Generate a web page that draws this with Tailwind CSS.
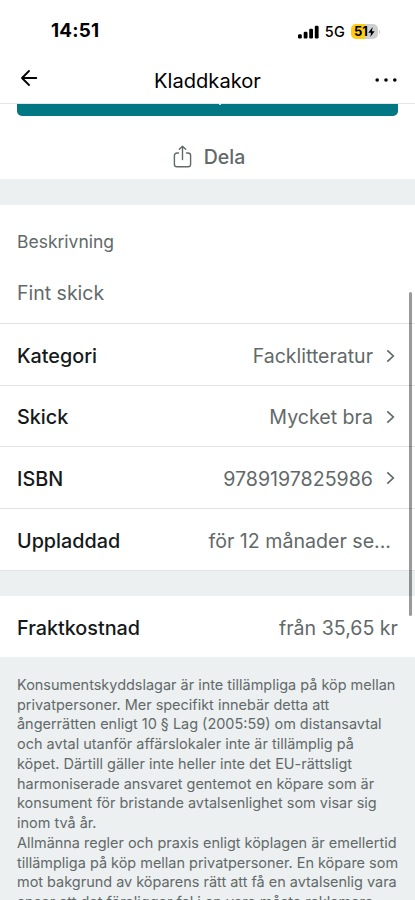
<!DOCTYPE html>
<html lang="sv">
<head>
<meta charset="utf-8">
<meta name="viewport" content="width=device-width, initial-scale=1">
<title>Kladdkakor</title>
<script src="https://cdn.jsdelivr.net/npm/@tailwindcss/browser@4"></script>
</head>
<body class="relative h-[900px] w-[415px] overflow-hidden bg-white font-['Inter',sans-serif] text-[19.6px] text-[#626969]">
<header class="flex h-[104px] flex-col border-b border-[#e4e6e7] text-black">
  <div class="flex h-[62px] items-center justify-between pt-[1px] pr-[35px] pl-[51px]">
    <span class="text-[18.8px] font-bold tracking-[0.2px]">14:51</span>
    <div class="flex items-center">
      <svg class="h-[14px] w-[21px]" viewBox="0 0 21 14"><rect x="0" y="9.3" width="3.8" height="4.2" rx="1.2"/><rect x="5.7" y="6.7" width="3.8" height="6.800" rx="1.2"/><rect x="11.2" y="3.8" width="3.8" height="9.700" rx="1.2"/><rect x="16.8" y="0.7" width="3.8" height="12.800" rx="1.2"/></svg>
      <span class="ml-[6px] text-[14.5px] font-medium tracking-[0.2px]">5G</span>
      <div class="ml-[6px] flex h-[15px] w-[27px] items-center justify-center rounded-[5px] bg-linear-to-r from-[#fccd13] from-52% to-[#cfcfcf] to-52%">
        <span class="text-[13px] font-bold">51</span>
        <svg class="h-[10px] w-[7px]" viewBox="0 0 7 11"><path d="M4.8 0 0 6.2h3L2.2 11 7 4.7H4z"/></svg>
      </div>
      <span class="ml-[1px] h-[4px] w-[1px] rounded-r bg-[#cfcfcf]"></span>
    </div>
  </div>
  <div class="flex h-[41px] items-center justify-between pr-[17px] pl-[21px]">
    <svg class="mt-[-9px] h-[16px] w-[17px]" viewBox="0 0 17 16" fill="none" stroke="#000" stroke-width="1.8" stroke-linecap="round" stroke-linejoin="round"><path d="M15.300 8H1.2M8 1 1 8l7 7"/></svg>
    <h1 class="mt-[-3px] pl-[2px] text-[20.1px]">Kladdkakor</h1>
    <svg class="mt-[-5px] h-[4px] w-[23px]" viewBox="0 0 23 4"><circle cx="2.2" cy="2" r="1.8"/><circle cx="11" cy="2" r="1.8"/><circle cx="19.8" cy="2" r="1.8"/></svg>
  </div>
</header>
<main>
  <div class="flex h-[12px] justify-center px-[17px]">
    <div class="relative w-full rounded-b-[5px] bg-[#007782]"><span class="absolute top-[-1px] left-[202px] h-[2px] w-[2px] rounded-full bg-white"></span></div>
  </div>
  <div class="flex h-[63px] items-center justify-center gap-[12px] pt-[19px] pl-[3px]">
    <svg class="mt-[-2px] h-[23px] w-[19px]" viewBox="0 0 19 23" fill="none" stroke="#626969" stroke-width="1.4" stroke-linecap="round" stroke-linejoin="round"><path d="M5.5 8H4a2.6 2.6 0 0 0-2.6 2.6v8.6A2.6 2.6 0 0 0 4 21.800h11a2.600 2.600 0 0 0 2.600-2.600v-8.600A2.600 2.600 0 0 0 15 8h-1.500M9.500 14.500V1.500M6.300 4.300l3.200-3.100 3.200 3.100"/></svg>
    <span class="pt-[1px] text-[19.5px] font-medium">Dela</span>
  </div>
  <div class="h-[26px] bg-[#ecf0f1]"></div>
  <section class="flex h-[119px] flex-col border-b border-[#e0e3e4] px-[17px] pt-[25px]">
    <h2 class="text-[17.5px] leading-[24px]">Beskrivning</h2>
    <p class="mt-[25px] text-[19.5px] leading-[28px]">Fint skick</p>
  </section>
  <section>
    <div class="flex h-[62px] items-center justify-between border-b border-[#e0e3e4] pt-[4px] pr-[19px] pl-[17px]"><span class="text-[19.8px] font-medium text-[#15191a]">Kategori</span><span class="flex items-center gap-[13px] text-[19.5px]">Facklitteratur<svg class="mt-[-2px] mr-px h-[14px] w-[9px]" viewBox="0 0 9 14" fill="none" stroke="#626969" stroke-width="1.7"><path d="m1.300 1.300 6 5.700-6 5.700"/></svg></span></div>
    <div class="flex h-[61px] items-center justify-between border-b border-[#e0e3e4] pt-[4px] pr-[19px] pl-[17px]"><span class="text-[19.8px] font-medium text-[#15191a]">Skick</span><span class="flex items-center gap-[13px]">Mycket bra<svg class="mt-[-2px] mr-px h-[14px] w-[9px]" viewBox="0 0 9 14" fill="none" stroke="#626969" stroke-width="1.7"><path d="m1.300 1.300 6 5.700-6 5.700"/></svg></span></div>
    <div class="flex h-[62px] items-center justify-between border-b border-[#e0e3e4] pt-[4px] pr-[19px] pl-[17px]"><span class="text-[19.8px] font-medium text-[#15191a]">ISBN</span><span class="flex items-center gap-[13px]">9789197825986<svg class="mt-[-2px] mr-px h-[14px] w-[9px]" viewBox="0 0 9 14" fill="none" stroke="#626969" stroke-width="1.7"><path d="m1.300 1.300 6 5.700-6 5.700"/></svg></span></div>
    <div class="flex h-[62px] items-center justify-between border-b border-[#e0e3e4] pt-[4px] pr-[24px] pl-[17px]"><span class="text-[19.8px] font-medium text-[#15191a]">Uppladdad</span><span>för 12 månader se...</span></div>
  </section>
  <div class="h-[25px] bg-[#ecf0f1]"></div>
  <div class="flex h-[61px] items-center justify-between px-[17px] pt-[4px]"><span class="text-[19.8px] font-medium text-[#15191a]">Fraktkostnad</span><span>från 35,65 kr</span></div>
  <section class="h-[243px] bg-[#ecf0f1] pt-[18px] pl-[17px] text-[14.46px] leading-[19.73px] whitespace-nowrap">
    <p>Konsumentskyddslagar är inte tillämpliga på köp mellan<br>privatpersoner. Mer specifikt innebär detta att<br>ångerrätten enligt 10 § Lag (2005:59) om distansavtal<br>och avtal utanför affärslokaler inte är tillämplig på<br>köpet. Därtill gäller inte heller inte det EU-rättsligt<br>harmoniserade ansvaret gentemot en köpare som är<br>konsument för bristande avtalsenlighet som visar sig<br>inom två år.</p>
    <p>Allmänna regler och praxis enligt köplagen är emellertid<br>tillämpliga på köp mellan privatpersoner. En köpare som<br>mot bakgrund av köparens rätt att få en avtalsenlig vara<br>anser att det föreligger fel i en vara måste reklamera</p>
  </section>
</main>
<div class="absolute top-[292px] right-[3px] h-[324px] w-[3px] rounded-full bg-black/40"></div>
</body>
</html>
